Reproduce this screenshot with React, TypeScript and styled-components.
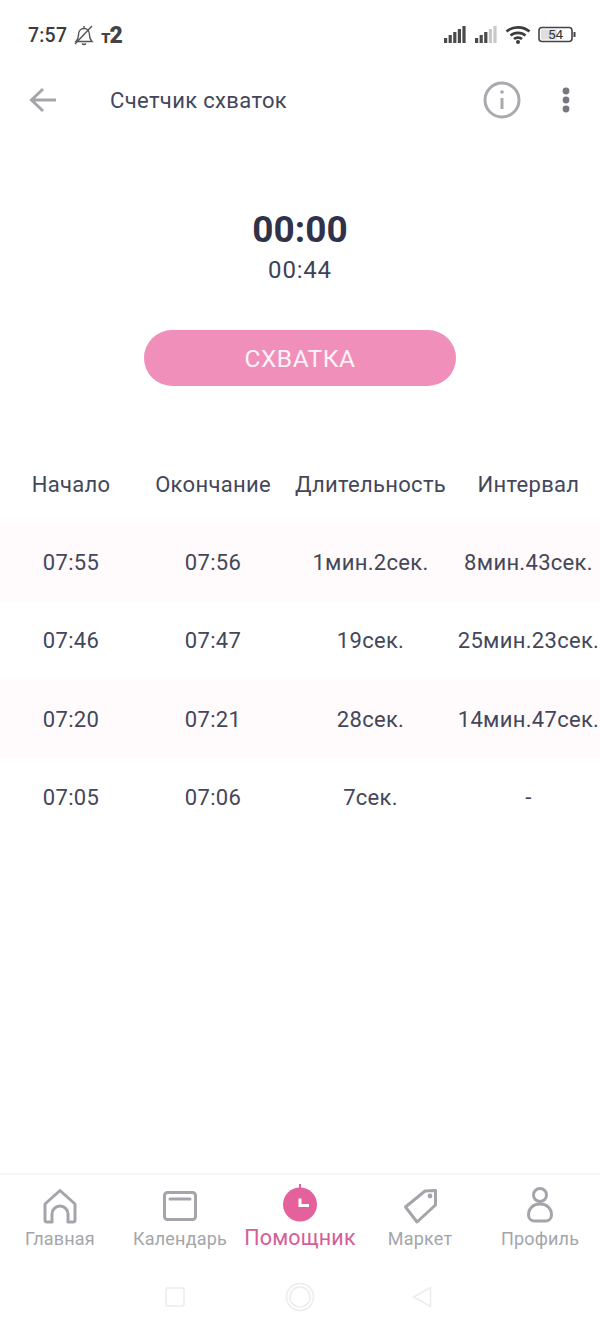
import React from "react";
import styled, { createGlobalStyle } from "styled-components";

const GlobalStyle = createGlobalStyle`
  html, body {
    margin: 0;
    padding: 0;
    background: #fff;
  }
  body {
    font-family: Roboto, "Noto Sans", sans-serif;
    color: #33364a;
  }
`;

const rows = [
  { start: "07:55", end: "07:56", duration: "1мин.2сек.", interval: "8мин.43сек." },
  { start: "07:46", end: "07:47", duration: "19сек.", interval: "25мин.23сек." },
  { start: "07:20", end: "07:21", duration: "28сек.", interval: "14мин.47сек." },
  { start: "07:05", end: "07:06", duration: "7сек.", interval: "-" },
];

const Screen = styled.div`
  width: 600px;
  height: 1332px;
  display: flex;
  flex-direction: column;
  overflow: hidden;
  background: #fff;
`;

const StatusBar = styled.div`
  height: 70px;
  box-sizing: border-box;
  padding: 0 24px 0 28px;
  display: flex;
  justify-content: space-between;
  align-items: center;
`;

const StatusGroup = styled.div`
  display: flex;
  align-items: center;
  gap: 7px;
`;

const Clock = styled.span`
  font-size: 19.5px;
  font-weight: 500;
  letter-spacing: 0.2px;
  color: #3c3c3c;
`;

const Carrier = styled.span`
  display: flex;
  align-items: baseline;
  color: #444;
  font-size: 18px;
  font-weight: 700;
`;

const CarrierDigit = styled.span`
  font-size: 23px;
  font-weight: 900;
  margin-left: -1px;
`;

const Header = styled.div`
  height: 60px;
  box-sizing: border-box;
  padding: 0 29px 0 28px;
  display: flex;
  align-items: center;
`;

const Title = styled.div`
  font-size: 22px;
  margin-left: 52px;
  flex: 1;
  color: #43465a;
  letter-spacing: 0.35px;
`;

const InfoSvg = styled.svg`
  margin-right: 40px;
`;

const Timer = styled.div`
  margin-top: 80px;
  text-align: center;
  font-size: 37px;
  line-height: 40px;
  font-weight: 700;
  color: #2f3248;
`;

const SubTimer = styled.div`
  text-align: center;
  font-size: 24px;
  line-height: 40px;
  color: #3f4254;
  letter-spacing: 0.8px;
`;

const MainButton = styled.button`
  align-self: center;
  margin-top: 40px;
  width: 312px;
  height: 56px;
  padding: 0;
  border: 0;
  border-radius: 28px;
  background: #f08fb9;
  color: #fdf3f7;
  font: 400 24.5px Roboto, sans-serif;
  letter-spacing: 0.5px;
`;

const Table = styled.div`
  margin-top: 59px;
`;

const Row = styled.div<{ $tinted?: boolean }>`
  height: 78.3px;
  display: grid;
  grid-template-columns: 142px 142px 173px 143px;
  align-items: center;
  background: ${({ $tinted }) => ($tinted ? "#fffafb" : "#fff")};
`;

const Cell = styled.div`
  text-align: center;
  font-size: 22px;
  color: #44475a;
  white-space: nowrap;
  letter-spacing: 0.3px;
`;

const Spacer = styled.div`
  flex: 1;
`;

const TabBar = styled.div`
  height: 83px;
  border-top: 2px solid #f6f6f6;
  box-sizing: border-box;
  display: grid;
  grid-template-columns: repeat(5, 120px);
`;

const Tab = styled.div<{ $active?: boolean }>`
  display: flex;
  flex-direction: column;
  align-items: center;
  padding-top: 12px;
  color: ${({ $active }) => ($active ? "#d85c97" : "#a4a5ab")};
  font-size: ${({ $active }) => ($active ? "21.5px" : "18px")};
  white-space: nowrap;
`;

const TabIcon = styled.svg`
  width: 40px;
  height: 40px;
  flex: none;
  overflow: visible;
`;

const TabLabel = styled.span<{ $active?: boolean }>`
  line-height: 24px;
  margin-top: ${({ $active }) => ($active ? "-1px" : "0")};
  letter-spacing: 0.2px;
`;

const SystemNav = styled.div`
  height: 76px;
  display: flex;
  justify-content: center;
  align-items: center;
  padding-top: 6px;
  box-sizing: border-box;
  gap: 100px;
`;

const NavBack = styled.svg`
  margin: 0 3px 0 -3px;
`;

const BackArrow = () => (
  <svg width="30" height="30" viewBox="0 0 30 30" fill="none" stroke="#a3a5ab" strokeWidth="3">
    <path d="M28 15H4M15 4 3.5 15 15 26" />
  </svg>
);

const InfoIcon = () => (
  <InfoSvg width="38" height="38" viewBox="0 0 38 38" fill="none" stroke="#a9aaaf" strokeWidth="3">
    <circle cx="19" cy="19" r="17" />
    <path d="M19 17v11" />
    <circle cx="19" cy="11" r="1.8" fill="#a9aaaf" stroke="none" />
  </InfoSvg>
);

const MoreIcon = () => (
  <svg width="10" height="30" viewBox="0 0 10 30" fill="#77787f">
    <circle cx="5" cy="6" r="3.4" />
    <circle cx="5" cy="15" r="3.4" />
    <circle cx="5" cy="24" r="3.4" />
  </svg>
);

const BellOff = () => (
  <svg width="20" height="22" viewBox="0 0 20 22" fill="none" stroke="#555" strokeWidth="1.4">
    <path d="M2 17.5h16c-2-2-2.5-3.5-2.5-6.5 0-3.5-2-6.5-5.5-6.5S4.500 7.500 4.500 11c0 3-.5 4.500-2.500 6.500Z" />
    <path d="M8 19.500c1 1.300 3 1.300 4 0M10 2v2.500M1 20 18 2" />
  </svg>
);

const Signal = ({ dim }: { dim: number }) => (
  <svg width="24" height="18" viewBox="0 0 24 18">
    {[0, 1, 2, 3, 4].map((i) => (
      <rect
        key={i}
        x={1 + i * 4.6}
        y={12 - i * 3}
        width="3.2"
        height={5 + i * 3}
        fill={i >= dim ? "#c9c9c9" : "#4a4a4a"}
      />
    ))}
  </svg>
);

const Wifi = () => (
  <svg width="26" height="20" viewBox="0 0 26 20" fill="none" stroke="#3c3c3c" strokeWidth="2.6">
    <path d="M1.5 6.500c6.500-5.500 16.500-5.500 23 0M5.500 10.500c4-3.500 11-3.500 15 0M9 14c2-1.800 6-1.800 8 0" />
    <circle cx="13" cy="17" r="2" fill="#3c3c3c" stroke="none" />
  </svg>
);

const Battery = () => (
  <svg width="38" height="18" viewBox="0 0 38 18">
    <rect x="1" y="1.5" width="33" height="14" rx="3" fill="#fff" stroke="#444" strokeWidth="1.6" />
    <rect x="3" y="3.5" width="16" height="10" fill="#dedede" />
    <rect x="35.5" y="6" width="2" height="5" fill="#444" />
    <text x="17.5" y="13.2" fontSize="13.5" textAnchor="middle" fill="#333" fontFamily="Roboto, sans-serif">54</text>
  </svg>
);

const stroke = { fill: "none", stroke: "#a4a5ab", strokeWidth: 3, strokeLinejoin: "round" as const, strokeLinecap: "round" as const };

const tabs = [
  {
    label: "Главная",
    icon: <path {...stroke} d="M5 17 20 3.500 35 17v16a2 2 0 0 1-2 2h-5v-8a8 8 0 0 0-16 0v8H7a2 2 0 0 1-2-2Z" />,
  },
  {
    label: "Календарь",
    icon: (
      <>
        <rect {...stroke} x="4.5" y="5.5" width="31" height="27" rx="3" />
        <path {...stroke} d="M10 12h20" />
      </>
    ),
  },
  {
    label: "Помощник",
    active: true,
    icon: (
      <>
        <circle cx="20" cy="17.5" r="17" fill="#e5619c" />
        <rect x="19" y="-3" width="2" height="5" fill="#e5619c" />
        <path d="M20 11.500v7h9" fill="none" stroke="#fff" strokeWidth="3" />
      </>
    ),
  },
  {
    label: "Маркет",
    icon: (
      <>
        <path {...stroke} d="M5.500 20 25 4l10.500-.5V18L17 35Z" />
        <circle cx="30" cy="9" r="2.400" fill="#a4a5ab" />
      </>
    ),
  },
  {
    label: "Профиль",
    icon: (
      <>
        <circle {...stroke} cx="20" cy="8" r="6.500" />
        <path {...stroke} d="M8.500 28c0-7 5-11 11.500-11s11.500 4 11.500 11c0 4-3 6-6 6h-11c-3 0-6-2-6-6Z" />
      </>
    ),
  },
];

const App = () => (
  <Screen>
    <GlobalStyle />
    <StatusBar>
      <StatusGroup>
        <Clock>7:57</Clock>
        <BellOff />
        <Carrier>
          т<CarrierDigit>2</CarrierDigit>
        </Carrier>
      </StatusGroup>
      <StatusGroup>
        <Signal dim={5} />
        <Signal dim={3} />
        <Wifi />
        <Battery />
      </StatusGroup>
    </StatusBar>
    <Header>
      <BackArrow />
      <Title>Счетчик схваток</Title>
      <InfoIcon />
      <MoreIcon />
    </Header>
    <Timer>00:00</Timer>
    <SubTimer>00:44</SubTimer>
    <MainButton>СХВАТКА</MainButton>
    <Table>
      <Row>
        <Cell>Начало</Cell>
        <Cell>Окончание</Cell>
        <Cell>Длительность</Cell>
        <Cell>Интервал</Cell>
      </Row>
      {rows.map((row, i) => (
        <Row key={row.start} $tinted={i % 2 === 0}>
          <Cell>{row.start}</Cell>
          <Cell>{row.end}</Cell>
          <Cell>{row.duration}</Cell>
          <Cell>{row.interval}</Cell>
        </Row>
      ))}
    </Table>
    <Spacer />
    <TabBar>
      {tabs.map((tab) => (
        <Tab key={tab.label} $active={tab.active}>
          <TabIcon viewBox="0 0 40 40">{tab.icon}</TabIcon>
          <TabLabel $active={tab.active}>{tab.label}</TabLabel>
        </Tab>
      ))}
    </TabBar>
    <SystemNav>
      <svg width="20" height="20" viewBox="0 0 20 20" fill="none" stroke="#ececec" strokeWidth="1.5">
        <rect x="1" y="1" width="18" height="18" rx="1.5" />
      </svg>
      <svg width="30" height="30" viewBox="0 0 30 30" fill="none" stroke="#ececec" strokeWidth="1.5">
        <circle cx="15" cy="15" r="13.5" />
        <circle cx="15" cy="15" r="10" />
      </svg>
      <NavBack width="20" height="22" viewBox="0 0 20 22" fill="none" stroke="#ececec" strokeWidth="1.5">
        <path d="M18.5 1.500v19L1.500 11Z" />
      </NavBack>
    </SystemNav>
  </Screen>
);

export default App;
